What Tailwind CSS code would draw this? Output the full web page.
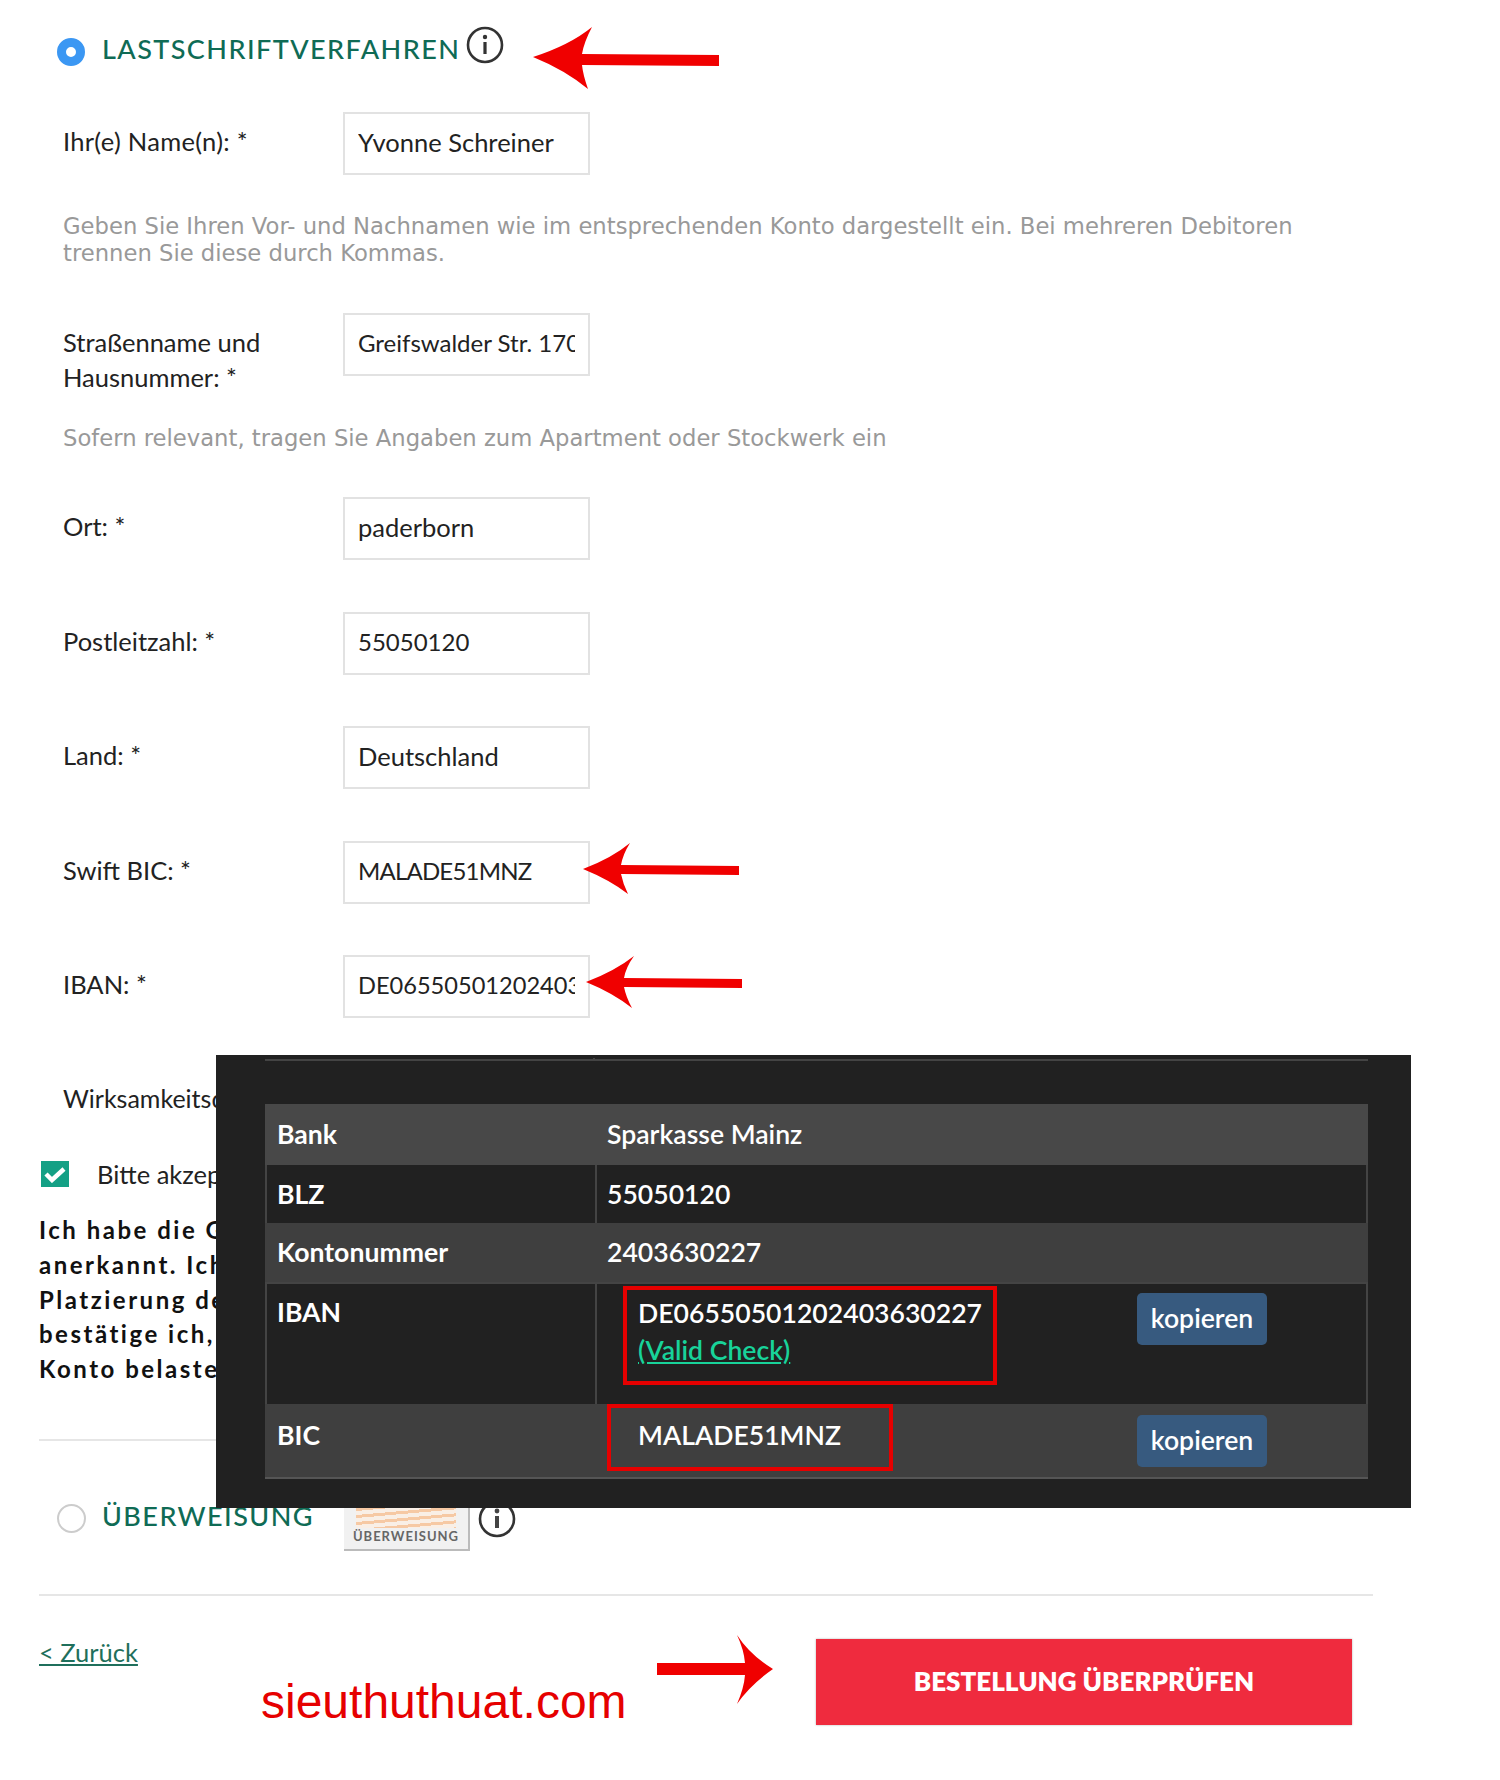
<!DOCTYPE html>
<html lang="de">
<head>
<meta charset="UTF-8">
<title>Lastschriftverfahren</title>
<script src="https://cdn.jsdelivr.net/npm/@tailwindcss/browser@4"></script>
</head>
<body class="bg-white">
<div class="relative w-[1500px] h-[1780px] overflow-hidden font-['Lato',sans-serif] text-[#222]">

  <!-- form -->
  <div class="flex flex-col pt-[26px]">
    <div class="flex items-center h-[44px] pl-[57px]">
      <span class="w-[28px] h-[28px] mt-[8px] rounded-full border-[9px] border-[#3b97f3] bg-white"></span>
      <span class="ml-[17px] text-[27px] tracking-[1.45px] font-medium text-[#0f6b55] leading-none">LASTSCHRIFTVERFAHREN</span>
      <svg class="ml-[6px] -mt-[7px]" width="38" height="38" viewBox="0 0 38 38"><circle cx="19" cy="19" r="17" fill="none" stroke="#333" stroke-width="2.6"/><circle cx="19" cy="11" r="2.2" fill="#333"/><rect x="17.4" y="16" width="3.2" height="12" fill="#333"/></svg>
    </div>

    <div class="flex pl-[63px] mt-[42px]">
      <label class="w-[280px] text-[25.5px] tracking-[0.3px] leading-[59px]">Ihr(e) Name(n): *</label>
      <input value="Yvonne Schreiner" class="w-[247px] h-[63px] border-2 border-[#e2e2e2] px-[13px] pb-[4px] text-[25.5px] text-[#222]">
    </div>
    <p class="pl-[63px] mt-[38px] w-[1340px] text-[22.7px] leading-[27px] text-[#999] font-['DejaVu_Sans',sans-serif]">Geben Sie Ihren Vor- und Nachnamen wie im entsprechenden Konto dargestellt ein. Bei mehreren Debitoren trennen Sie diese durch Kommas.</p>

    <div class="flex pl-[63px] mt-[46px]">
      <label class="w-[280px] text-[25.5px] leading-[35px] pt-[12px]">Straßenname und<br>Hausnummer: *</label>
      <input value="Greifswalder Str. 170" class="w-[247px] h-[63px] border-2 border-[#e2e2e2] px-[13px] pb-[4px] text-[24px] text-[#222]">
    </div>
    <p class="pl-[63px] mt-[30px] text-[22.7px] leading-[27px] text-[#999] font-['DejaVu_Sans',sans-serif]">Sofern relevant, tragen Sie Angaben zum Apartment oder Stockwerk ein</p>

    <div class="flex pl-[63px] mt-[45px]">
      <label class="w-[280px] text-[25.5px] leading-[59px]">Ort: *</label>
      <input value="paderborn" class="w-[247px] h-[63px] border-2 border-[#e2e2e2] px-[13px] pb-[4px] text-[25.5px] text-[#222]">
    </div>
    <div class="flex pl-[63px] mt-[52px]">
      <label class="w-[280px] text-[25.5px] leading-[59px]">Postleitzahl: *</label>
      <input value="55050120" class="w-[247px] h-[63px] border-2 border-[#e2e2e2] px-[13px] pb-[4px] text-[24px] text-[#222]">
    </div>
    <div class="flex pl-[63px] mt-[51px]">
      <label class="w-[280px] text-[25.5px] leading-[59px]">Land: *</label>
      <input value="Deutschland" class="w-[247px] h-[63px] border-2 border-[#e2e2e2] px-[13px] pb-[4px] text-[25.5px] text-[#222]">
    </div>
    <div class="flex pl-[63px] mt-[52px]">
      <label class="w-[280px] text-[25.5px] leading-[59px]">Swift BIC: *</label>
      <input value="MALADE51MNZ" class="w-[247px] h-[63px] border-2 border-[#e2e2e2] px-[13px] pb-[4px] text-[24px] tracking-[-0.8px] text-[#222]">
    </div>
    <div class="flex pl-[63px] mt-[51px]">
      <label class="w-[280px] text-[25.5px] leading-[59px]">IBAN: *</label>
      <input value="DE06550501202403630227" class="w-[247px] h-[63px] border-2 border-[#e2e2e2] px-[13px] pb-[4px] text-[23.6px] text-[#222]">
    </div>

    <div class="pl-[63px] mt-[49px] text-[25px] leading-[62px]">Wirksamkeitsd</div>

    <div class="flex items-center pl-[41px] mt-[26px]">
      <span class="flex items-center justify-center w-[28px] h-[26px] bg-[#14a085]">
        <svg width="22" height="18" viewBox="0 0 22 18"><path d="M2 9l6 6L20 4" fill="none" stroke="#fff" stroke-width="4.5"/></svg>
      </span>
      <span class="ml-[28px] text-[25.5px]">Bitte akzep</span>
    </div>

    <p class="pl-[39px] mt-[20px] w-[1000px] text-[24px] leading-[34.7px] tracking-[2.5px] font-bold whitespace-nowrap text-[#111]">Ich habe die G<br>anerkannt. Ich<br>Platzierung de<br>bestätige ich,<br>Konto belaste</p>

    <div class="ml-[39px] mt-[52px] w-[1334px] border-t-2 border-[#e6e6e6]"></div>

    <div class="flex items-center pl-[57px] mt-[54px] h-[48px]">
      <span class="w-[29px] h-[29px] rounded-full border-2 border-[#ccc] bg-white"></span>
      <span class="ml-[16px] -mt-[7px] text-[27px] tracking-[1.45px] font-medium text-[#0f6b55] leading-none">ÜBERWEISUNG</span>
      <div class="ml-[30px] flex flex-col justify-end items-center w-[126px] h-[66px] -mt-[2px] bg-[#f1f1f1] border-b-2 border-r-2 border-[#bbb]">
        <div class="w-[100px] h-[20px] mb-[2px] bg-[repeating-linear-gradient(175deg,#f6c9a4_0_3px,#f9efe6_3px_7px)]"></div>
        <span class="mb-[6px] text-[13px] leading-none font-bold tracking-[1px] text-[#666]">ÜBERWEISUNG</span>
      </div>
      <svg class="ml-[8px]" width="38" height="38" viewBox="0 0 38 38"><circle cx="19" cy="19" r="17" fill="none" stroke="#333" stroke-width="2.6"/><circle cx="19" cy="11" r="2.4" fill="#444"/><rect x="17" y="16" width="4" height="12" fill="#444"/></svg>
    </div>

    <div class="ml-[39px] mt-[51px] w-[1334px] border-t-2 border-[#e6e6e6]"></div>

    <div class="flex justify-between items-start pl-[39px] pr-[148px] mt-[43px]">
      <a href="#" class="-mt-[2px] text-[25.5px] leading-[30px] text-[#1f6f5c] underline">&lt; Zurück</a>
      <button class="w-[536px] h-[86px] bg-[#ef2b3e] text-white text-[26px] font-extrabold shadow-[0_0_2px_rgba(0,0,0,0.3)]">BESTELLUNG ÜBERPRÜFEN</button>
    </div>
  </div>

  <!-- bank lookup screenshot pasted over the form -->
  <div class="absolute left-[216px] top-[1055px] w-[1195px] h-[453px] bg-[#212121] pl-[49px] pr-[43px] text-[26.6px] text-white">
    <div class="flex h-[3px] mt-[3px] border-b-2 border-[#444]"><div class="w-[330px] border-r-2 border-[#444]"></div></div>
    <div class="flex flex-col mt-[43px]">
      <div class="flex items-center h-[61px] pt-[1px] bg-[#484848]">
        <div class="w-[331px] pl-[12px] font-bold">Bank</div>
        <div class="pl-[11px] font-semibold">Sparkasse Mainz</div>
      </div>
      <div class="flex items-center h-[58px] bg-[#212121] border-x-2 border-[#444]">
        <div class="flex items-center h-full w-[330px] pl-[10px] pt-[1px] font-bold border-r-2 border-[#444]">BLZ</div>
        <div class="pl-[10px] pt-[1px] font-semibold">55050120</div>
      </div>
      <div class="flex items-center h-[59px] pt-[1px] bg-[#3f3f3f]">
        <div class="w-[331px] pl-[12px] font-bold">Kontonummer</div>
        <div class="pl-[11px] font-semibold">2403630227</div>
      </div>
      <div class="flex h-[122px] bg-[#212121] border-x-2 border-t-2 border-[#444]">
        <div class="w-[330px] pl-[10px] pt-[10px] font-bold border-r-2 border-[#444] leading-[36px]">IBAN</div>
        <div class="ml-[26px] mt-[2px] w-[374px] h-[99px] border-4 border-[#e60000] pl-[11px] pt-[5px] leading-[37px] font-semibold">
          DE06550501202403630227<br><a href="#" class="text-[#18d39a] underline">(Valid Check)</a>
        </div>
        <button class="ml-[140px] mt-[9px] w-[130px] h-[52px] rounded-[5px] bg-[#375a7f] text-white font-semibold">kopieren</button>
      </div>
      <div class="flex h-[75px] bg-[#3f3f3f] border-b-2 border-[#555]">
        <div class="w-[331px] pl-[12px] pt-[13px] font-bold leading-[36px]">BIC</div>
        <div class="ml-[11px] w-[286px] h-[67px] border-4 border-[#e60000] pl-[27px] pt-[9px] leading-[36px] font-semibold">MALADE51MNZ</div>
        <button class="ml-[244px] mt-[11px] w-[130px] h-[52px] rounded-[5px] bg-[#375a7f] text-white font-semibold">kopieren</button>
      </div>
    </div>
  </div>

  <!-- annotation arrows -->
  <svg class="absolute left-0 top-0" width="1500" height="1780" viewBox="0 0 1500 1780" fill="#f00000">
    <path d="M533 57Q570 45 592 27Q584 42 582 54L719 55V66L582 65Q583 75 588 89Q565 70 533 57Z"/>
    <path d="M583 869Q612 858 630 843Q623 854 621 865L739 866V875L621 874Q623 884 628 894Q610 880 583 869Z"/>
    <path d="M586 982Q615 971 634 956Q626 967 624 978L742 979V988L624 987Q626 997 632 1008Q613 993 586 982Z"/>
    <path d="M657 1663H745Q744 1650 737 1635Q750 1655 773 1669Q750 1685 737 1704Q744 1688 745 1675H657Z"/>
  </svg>

  <span class="absolute left-[261px] top-[1674px] text-[48px] leading-[56px] text-[#e60000] font-['Liberation_Sans',sans-serif]">sieuthuthuat.com</span>
</div>
</body>
</html>
